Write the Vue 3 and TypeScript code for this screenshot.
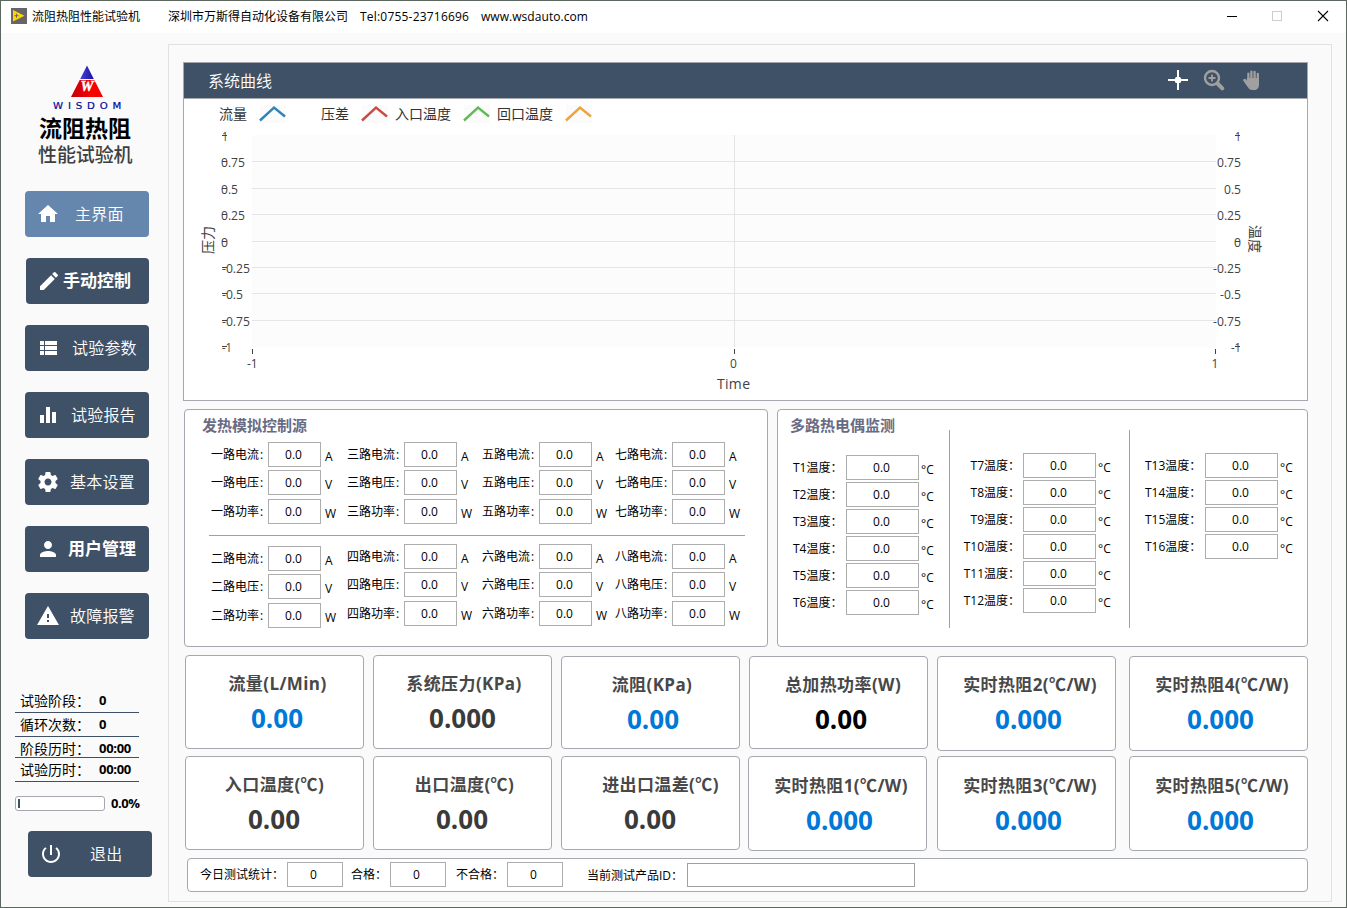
<script setup lang="ts">
interface NavItem { label: string; icon: string; gap: number; active?: boolean; bold?: boolean; inset?: boolean }
interface Card { title: string; value: string; tone: string; shiftTitle: number; shiftValue: number; top: number; height: number; pad: number; left: number }

const nav: NavItem[] = [
  { label: '主界面', gap: 15, active: true, icon: 'M10 20v-6h4v6h5v-8h3L12 3 2 12h3v8z' },
  { label: '手动控制', gap: 2, bold: true, inset: true, icon: 'M3 17.25V21h3.75L17.81 9.94l-3.75-3.75L3 17.25zM20.71 7.04a1 1 0 0 0 0-1.41l-2.34-2.34a1 1 0 0 0-1.41 0l-1.83 1.83 3.75 3.75 1.83-1.83z' },
  { label: '试验参数', gap: 12, icon: 'M4 14h4v-4H4v4zm0 5h4v-4H4v4zM4 9h4V5H4v4zm5 5h12v-4H9v4zm0 5h12v-4H9v4zM9 5v4h12V5H9z' },
  { label: '试验报告', gap: 11, icon: 'M10 20h4V4h-4v16zm-6 0h4v-8H4v8zM16 9v11h4V9h-4z' },
  { label: '基本设置', gap: 10, icon: 'M19.43 12.98c.04-.32.07-.64.07-.98s-.03-.66-.07-.98l2.11-1.65c.19-.15.24-.42.12-.64l-2-3.46c-.12-.22-.39-.3-.61-.22l-2.49 1c-.52-.4-1.08-.73-1.69-.98l-.38-2.65A.488.488 0 0 0 14 2h-4c-.25 0-.46.18-.49.42l-.38 2.65c-.61.25-1.17.59-1.69.98l-2.49-1c-.23-.09-.49 0-.61.22l-2 3.46c-.13.22-.07.49.12.64l2.11 1.65c-.04.32-.07.65-.07.98s.03.66.07.98l-2.11 1.65c-.19.15-.24.42-.12.64l2 3.46c.12.22.39.3.61.22l2.49-1c.52.4 1.08.73 1.69.98l.38 2.65c.03.24.24.42.49.42h4c.25 0 .46-.18.49-.42l.38-2.65c.61-.25 1.17-.59 1.69-.98l2.49 1c.23.09.49 0 .61-.22l2-3.46c.12-.22.07-.49-.12-.64l-2.11-1.65zM12 15.5c-1.93 0-3.5-1.57-3.5-3.5s1.57-3.5 3.5-3.5 3.5 1.57 3.5 3.5-1.57 3.5-3.5 3.5z' },
  { label: '用户管理', gap: 8, bold: true, icon: 'M12 12c2.21 0 4-1.79 4-4s-1.79-4-4-4-4 1.79-4 4 1.79 4 4 4zm0 2c-2.67 0-8 1.34-8 4v2h16v-2c0-2.66-5.33-4-8-4z' },
  { label: '故障报警', gap: 10, icon: 'M1 21h22L12 2 1 21zm12-3h-2v-2h2v2zm0-4h-2v-4h2v4z' },
]

const stats = [
  { label: '试验阶段：', value: '0', height: 24, tight: false },
  { label: '循环次数：', value: '0', height: 24, tight: false },
  { label: '阶段历时：', value: '00:00', height: 21, tight: true },
  { label: '试验历时：', value: '00:00', height: 24, tight: false },
]

const quantities = [
  { name: '电流', unit: 'A' },
  { name: '电压', unit: 'V' },
  { name: '功率', unit: 'W' },
]
const banks = [
  ['一', '三', '五', '七'],
  ['二', '四', '六', '八'],
]

const probes = [
  { key: 'a', items: [1, 2, 3, 4, 5, 6] },
  { key: 'b', items: [7, 8, 9, 10, 11, 12] },
  { key: 'c', items: [13, 14, 15, 16] },
]

const card = (title: string, value: string, tone: string, shiftTitle: number, shiftValue: number, top = 0, height = 94, pad = 0, left = 9): Card =>
  ({ title, value, tone, shiftTitle, shiftValue, top, height, pad, left })

const cards: Card[][] = [
  [
    card('流量(L/Min)', '0.00', 'blue', 3, 2.5, 0, 94, 0, 0),
    card('系统压力(KPa)', '0.000', 'dark', 1.5, 0),
    card('流阻(KPa)', '0.00', 'blue', 1.5, 2.5, 1, 93),
    card('总加热功率(W)', '0.00', 'black', 4.5, 2.5, 1, 93),
    card('实时热阻2(℃/W)', '0.000', 'blue', 3.5, 2, 1, 95),
    card('实时热阻4(℃/W)', '0.000', 'blue', 3.5, 2, 1, 95, 0, 13),
  ],
  [
    card('入口温度(℃)', '0.00', 'dark', 0, -0.5, 0, 94, 0, 0),
    card('出口温度(℃)', '0.00', 'dark', 2, -0.5),
    card('进出口温差(℃)', '0.00', 'dark', 10, -0.5),
    card('实时热阻1(℃/W)', '0.000', 'blue', 3.5, 2, 0, 95, 1, 8),
    card('实时热阻3(℃/W)', '0.000', 'blue', 3.5, 2, 0, 95, 1, 10),
    card('实时热阻5(℃/W)', '0.000', 'blue', 3.5, 2, 0, 95, 1, 13),
  ],
]

const legend = [
  { label: '流量', x: 219, w: 28, line: 260, color: '#2f83bd' },
  { label: '压差', x: 321, w: 28, line: 362, color: '#cc4a44' },
  { label: '入口温度', x: 395, w: 56, line: 464, color: '#5fbb55' },
  { label: '回口温度', x: 497, w: 56, line: 566, color: '#f0a23c' },
]

const ticks = [
  { text: '1', y: 135, w: 6 },
  { text: '0.75', y: 161, w: 24 },
  { text: '0.5', y: 188, w: 17 },
  { text: '0.25', y: 214, w: 24 },
  { text: '0', y: 241, w: 7 },
  { text: '-0.25', y: 267, w: 28 },
  { text: '-0.5', y: 293, w: 21 },
  { text: '-0.75', y: 320, w: 28 },
  { text: '-1', y: 346, w: 10 },
]
const whole = ['1', '0', '-1']
</script>

<template>
  <div class="window">
    <header class="titlebar">
      <svg class="app-icon" width="16" height="16" viewBox="0 0 16 16">
        <rect width="16" height="16" fill="#66666a" />
        <path d="M2 2l11.5 5.8L2 13.5z" fill="#ffd500" />
        <path d="M3.5 7.7h4M5.5 5.7v4" stroke="#66666a" stroke-width="1" />
      </svg>
      <span class="app-name">流阻热阻性能试验机</span>
      <span class="company">深圳市万斯得自动化设备有限公司</span>
      <span class="tel">Tel:0755-23716696</span>
      <span class="site">www.wsdauto.com</span>
      <svg class="controls" width="106" height="14" viewBox="0 0 106 14" fill="none">
        <path d="M2 7.5h10" stroke="#000" />
        <rect x="47.500" y="2.500" width="9" height="9" stroke="#ccc" />
        <path d="M93 2l10 10M103 2L93 12" stroke="#000" stroke-width="1.1" />
      </svg>
    </header>

    <div class="body">
      <aside class="sidebar">
        <svg class="logo" width="76" height="46" viewBox="49 65 76 46">
          <defs>
            <linearGradient id="red" x1="0" x2="1"><stop offset="0" stop-color="#c00008" /><stop offset=".6" stop-color="#f80000" /></linearGradient>
            <linearGradient id="blue" x1="0" x2="1"><stop offset="0" stop-color="#4444d8" /><stop offset="1" stop-color="#1c10a0" /></linearGradient>
          </defs>
          <path d="M87 65.500L93.800 79H80.200z" fill="url(#blue)" />
          <path d="M79.700 80h14.600L103 97H71z" fill="url(#red)" />
          <text x="80.500" y="91" class="logo-w" textLength="13" lengthAdjust="spacingAndGlyphs">W</text>
          <text transform="translate(53 108.500) scale(1.200 1)" class="logo-name" textLength="57">WISDOM</text>
        </svg>
        <h1>流阻热阻</h1>
        <h2>性能试验机</h2>

        <nav>
          <button v-for="item in nav" :key="item.label" class="btn" :class="{ active: item.active, bold: item.bold, inset: item.inset }">
            <svg width="24" height="24" viewBox="0 0 24 24"><path :d="item.icon" fill="#fff" /></svg>
            <span :style="{ marginLeft: item.gap + 'px' }">{{ item.label }}</span>
          </button>
        </nav>

        <div class="stats">
          <div v-for="s in stats" :key="s.label" class="stat" :class="{ tight: s.tight }" :style="{ height: s.height + 'px' }">
            <span class="stat-label">{{ s.label }}</span><b>{{ s.value }}</b>
          </div>
        </div>
        <div class="progress">
          <div class="track"><i></i></div>
          <b>0.0%</b>
        </div>
        <button class="btn exit">
          <svg width="24" height="24" viewBox="0 0 24 24"><path d="M13 3h-2v10h2V3zm4.830 2.170l-1.420 1.420A6.920 6.920 0 0 1 19 12c0 3.870-3.130 7-7 7s-7-3.130-7-7c0-2.190 1.010-4.140 2.580-5.420L6.170 5.170A8.932 8.932 0 0 0 3 12c0 4.970 4.030 9 9 9s9-4.030 9-9c0-2.740-1.230-5.180-3.170-6.830z" fill="#fff" /></svg>
          <span>退出</span>
        </button>
      </aside>

      <main class="main">
        <section class="chart">
          <div class="chart-head">
            <span>系统曲线</span>
            <svg width="96" height="24" viewBox="0 0 96 24">
              <path d="M2 12h20M12 2v20" stroke="#fff" stroke-width="2" />
              <rect x="9" y="9" width="6" height="6" rx="1.500" fill="#fff" />
              <g fill="none" stroke="#a0a0a0">
                <circle cx="46" cy="10" r="7" stroke-width="2.400" />
                <path d="M46 6.500v7M42.500 10h7" stroke-width="1.800" />
                <path d="M51.500 15.500l4.800 4.800" stroke-width="4" stroke-linecap="round" />
              </g>
              <g fill="none" stroke="#a0a0a0" stroke-linecap="round">
                <path d="M82.400 13V5.600M85.400 12V3.600M88.600 12V3.800M91.800 13V6" stroke-width="2.300" />
                <path d="M78.600 12.200l3.800 5.200" stroke-width="2.800" />
              </g>
              <path d="M81.200 10h11.800v6.500c0 3-1.600 5.500-4.200 5.500h-2.600c-2 0-3.200-1-4.200-2.800l-2.400-4z" fill="#a0a0a0" />
            </svg>
          </div>
          <svg class="plot" width="1123" height="301" viewBox="184 99 1123 301">
            <g v-for="l in legend" :key="l.label">
              <rect :x="l.line" y="105" width="26" height="18" fill="#fbfbfb" />
              <path :d="`M${l.line} 120.500L${l.line + 14} 107.500L${l.line + 25} 116.500`" :stroke="l.color" stroke-width="2.400" fill="none" />
              <text :x="l.x" y="119" class="legend" :textLength="l.w">{{ l.label }}</text>
            </g>
            <rect x="252" y="135" width="964" height="212" fill="#fcfcfc" />
            <g fill="#e5e5e5">
              <rect v-for="t in ticks.slice(1, -1)" :key="t.text" x="252" :y="t.y" width="964" height="1" />
              <rect x="734" y="135" width="1" height="212" />
            </g>
            <g class="axis">
              <template v-for="t in ticks" :key="t.text">
                <text :x="t.text[0] === '-' ? 222 : t.text === '1' ? 222 : 221" :y="t.y + 5.500" :textLength="t.w" lengthAdjust="spacingAndGlyphs">{{ t.text }}</text>
                <rect x="222" :y="t.y" width="5" height="1" />
                <text :x="1241 - t.w" :y="t.y + 5.500" :textLength="t.w" lengthAdjust="spacingAndGlyphs">{{ t.text }}</text>
                <rect v-if="whole.includes(t.text)" x="1235" :y="t.y" width="5" height="1" />
              </template>
              <rect x="252" y="349" width="1" height="5" />
              <rect x="734" y="349" width="1" height="5" />
              <rect x="1215" y="349" width="1" height="5" />
              <text x="247" y="368">-1</text>
              <text x="730" y="368">0</text>
              <text x="1211.500" y="368">1</text>
              <text x="717" y="389" class="axis-title" textLength="33">Time</text>
              <text class="axis-title" transform="translate(213 254) rotate(-90)" textLength="28">压力</text>
              <text class="axis-title" transform="translate(1250 225) rotate(90)" textLength="28">温度</text>
            </g>
          </svg>
        </section>

        <div class="panels">
          <section class="panel sources">
            <h3>发热模拟控制源</h3>
            <div v-for="(bank, b) in banks" :key="b" class="bank" :class="{ lower: b === 1 }">
              <div v-for="n in bank" :key="n" class="channel">
                <div v-for="q in quantities" :key="q.name" class="field">
                  <label>{{ n }}路{{ q.name }}<i>:</i></label>
                  <output>0.0</output>
                  <span class="unit">{{ q.unit }}</span>
                </div>
              </div>
            </div>
          </section>
          <section class="panel thermo">
            <div v-for="p in probes" :key="p.key" class="probe-col" :class="p.key">
              <h3 v-if="p.key === 'a'">多路热电偶监测</h3>
              <div v-for="i in p.items" :key="i" class="probe">
                <label>T{{ i }}温度：</label>
                <output>0.0</output>
                <span class="unit">°C</span>
              </div>
            </div>
          </section>
        </div>

        <div v-for="(row, r) in cards" :key="r" class="cards">
          <section
            v-for="c in row" :key="c.title" class="card"
            :style="{ marginTop: c.top + 'px', marginLeft: c.left + 'px', height: c.height + 'px', paddingTop: c.pad + 'px' }"
          >
            <h4 :style="{ transform: `translateX(${c.shiftTitle}px)` }">{{ c.title }}</h4>
            <strong :class="c.tone" :style="{ transform: `translateX(${c.shiftValue}px)` }">{{ c.value }}</strong>
          </section>
        </div>

        <footer class="summary">
          <label class="l1">今日测试统计：</label><output>0</output>
          <label class="l2">合格：</label><output>0</output>
          <label class="l3">不合格：</label><output>0</output>
          <label class="l4">当前测试产品ID：</label><input type="text">
        </footer>
      </main>
    </div>
  </div>
</template>

<style>
body { overflow: hidden; }
</style>

<style scoped>
.window, .window * { box-sizing: border-box; }
.window {
  width: 1347px;
  height: 908px;
  border: 1px solid #5c675f;
  background: #fafafa;
  color: #000;
  font: 12px/16px "Open Sans", "Noto Sans CJK SC", sans-serif;
  white-space: nowrap;
  overflow: hidden;
}
h1, h2, h3, h4 { margin: 0; }

.titlebar { height: 32px; background: #fff; display: flex; align-items: center; padding-left: 10px; }
.app-icon { margin-top: -2px; }
.app-name { margin-left: 5px; width: 136px; }
.company { width: 192px; }
.tel { width: 121px; letter-spacing: .2px; }
.site { letter-spacing: .05px; }
.controls { margin-left: auto; margin-right: 15px; margin-top: -2px; }

.body { display: flex; height: 874px; }
.sidebar { width: 167px; padding-top: 32px; }
.logo { display: block; margin-left: 48px; }
.logo-w { font: italic bold 14px "Liberation Serif", serif; fill: #fff; stroke: #fff; stroke-width: .4px; }
.logo-name { font: 8.500px "DejaVu Sans", sans-serif; fill: #0a0a9c; stroke: #0a0a9c; stroke-width: .2px; }
h1 { font-size: 23px; line-height: 26px; margin: 4px 0 0 38px; font-weight: 700; }
h2 { font-size: 19px; line-height: 24px; margin: 2px 0 0 37px; font-weight: 500; color: #3f3f3f; letter-spacing: -.1px; }

nav { display: flex; flex-direction: column; gap: 21px; margin: 24px 0 0 24px; }
.btn {
  width: 124px; height: 46px; border: 0; border-radius: 4px; padding: 0 0 0 11px;
  display: flex; align-items: center; background: #3f5166; color: #fff;
  font: 16px/24px "Open Sans", "Noto Sans CJK SC", sans-serif; font-weight: 350; letter-spacing: .2px;
}
.btn span { margin-top: -1px; }
.btn.active { background: #6587ad; }
.btn.bold { font-weight: 700; font-size: 17px; letter-spacing: 0; }
.btn.inset { width: 123px; margin-left: 1px; }
.btn.exit { margin: 20px 0 0 27px; }
.btn.exit span { margin-left: 27px; }

.stats { width: 124px; margin: 50px 0 0 14px; }
.stat { display: flex; align-items: flex-end; border-bottom: 1px solid #3f5166; padding: 0 0 1px 5px; font-size: 14px; line-height: 21px; }
.stat.tight { padding-bottom: 0; line-height: 17px; }
.stat-label { width: 79px; }
.stat b { font-size: 13px; letter-spacing: -.3px; }
.progress { display: flex; align-items: center; height: 15px; margin: 14px 0 0 14px; }
.track { width: 90px; height: 15px; border: 1px solid #a6a8b0; border-radius: 3px; background: #fff; padding: 2px; }
.track i { display: block; width: 2px; height: 9px; background: #3f5166; }
.progress b { margin: -2px 0 0 6px; font-size: 13px; letter-spacing: -.4px; }

.main { width: 1164px; height: 858px; margin-top: 11px; border: 1px solid #e1e1e2; padding: 17px 0 0 14px; }
.chart { width: 1125px; height: 339px; border: 1px solid #a6a8b0; background: #fff; }
.chart-head {
  height: 36px; background: #3f5166; border-bottom: 1px solid #a6a8b0; color: #fff; font-size: 16px;
  display: flex; align-items: center; justify-content: space-between; padding: 0 45px 2px 24px;
}
.chart-head span { margin-top: 2px; font-weight: 350; }
.plot { display: block; }
.legend { font-size: 14px; fill: #333; }
.axis { font-size: 12px; fill: #424242; }
.axis-title { font-size: 14px; }

.panels { display: flex; gap: 9px; margin: 8px 0 0 1px; }
.panel { height: 238px; border: 1px solid #a6a8b0; border-radius: 4px; background: #fff; }
.panel h3 { font-size: 15px; line-height: 20px; font-weight: 700; color: #686b84; }
output {
  display: block; height: 25px; border: 1px solid #adadad; background: #fff;
  text-align: center; line-height: 23px; padding-right: 2px;
}
.sources { width: 584px; }
.sources h3 { margin: 5px 0 7px 17px; }
.bank { width: 536px; margin-left: 24px; padding-left: 2px; display: grid; grid-template-columns: 136px 135px 133px 130px; border-bottom: 1px solid #a0a0a0; height: 94px; }
.lower { border: 0; padding-top: 8px; height: 100px; }
.lower .channel:first-child { padding-top: 2px; }
.field { display: flex; height: 25px; margin-bottom: 3px; line-height: 24px; }
.field:nth-child(2) { margin-bottom: 4px; }
.field label { width: 57px; padding-top: 1px; }
.field label i { font-style: normal; margin-left: 1px; }
.field output { width: 53px; }
.unit { margin: 3px 0 0 4px; }

.thermo { width: 531px; display: flex; }
.probe-col { display: flex; flex-direction: column; gap: 2px; height: 198px; margin-top: 20px; padding-top: 23px; }
.a { width: 171px; padding-left: 15px; padding-top: 0; margin-top: 5px; height: 213px; }
.a h3 { margin: 0 0 18px -3px; }
.b { width: 180px; border-left: 1px solid #a0a0a0; }
.c { width: 177px; border-left: 1px solid #a0a0a0; padding-left: 1px; }
.probe { display: flex; height: 25px; line-height: 24px; }
.probe label { width: 53px; padding-top: 1px; }
.b .probe label { width: 73px; text-align: right; padding-right: 3px; }
.c .probe label { width: 74px; padding-left: 14px; }
.probe output { width: 73px; flex: none; }
.probe .unit { margin: 3px 0 0 2px; }

.cards { display: flex; align-items: flex-start; height: 101px; margin-left: 2px; }
.panels + .cards { margin-top: 8px; }
.card { width: 179px; flex: none; border: 1px solid #a6a8b0; border-radius: 4px; background: #fff; text-align: center; }
.card h4 { margin-top: 16px; font-size: 17px; line-height: 24px; font-weight: 700; color: #484848; letter-spacing: .4px; }
.card strong { display: block; margin-top: 4px; font-size: 26px; line-height: 36px; }
.blue { color: #0078d7; }
.dark { color: #3a3a3a; }
.black { color: #000; }

.summary {
  display: flex; align-items: flex-start; width: 1121px; height: 34px; margin: 1px 0 0 4px;
  border: 1px solid #a6a8b0; border-radius: 4px; background: #fff; padding-top: 3px; line-height: 24px;
}
.summary output { width: 56px; padding-right: 3px; }
.summary label { padding-top: 1px; }
.l1 { width: 99px; padding-left: 12px; }
.l2 { width: 47px; padding-left: 8px; }
.l3 { width: 61px; padding-left: 10px; }
.l4 { width: 124px; padding-left: 24px; margin-top: 1px; }
.summary input { width: 228px; height: 24px; margin: 1px 0 0; border: 1px solid #a0a0a0; background: #fff; outline: 0; }
</style>
